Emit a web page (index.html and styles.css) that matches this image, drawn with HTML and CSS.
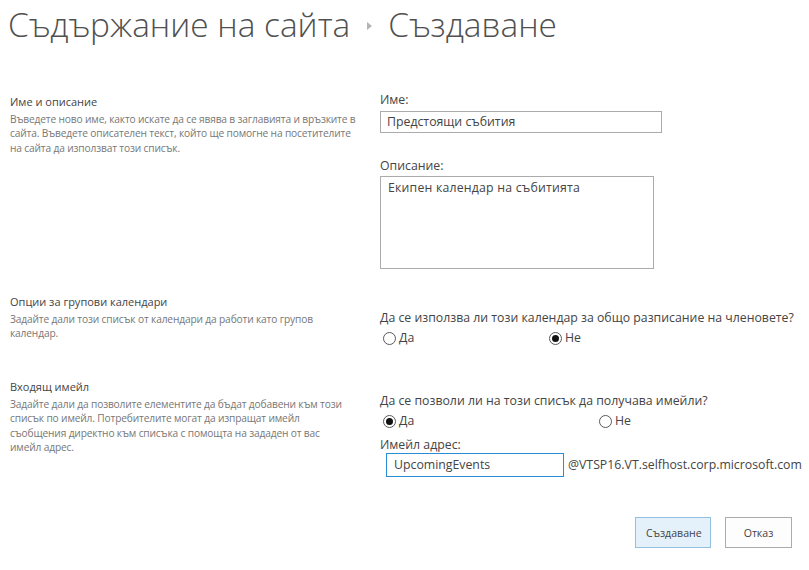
FILE: index.html
```html
<!DOCTYPE html>
<html lang="bg">
<head>
<meta charset="utf-8">
<title>Създаване</title>
<link rel="stylesheet" href="styles.css">
</head>
<body>
<div class="page">
  <h1 class="title">
    <span class="crumb">Съдържание на сайта</span>
    <span class="sep"></span>
    <span class="crumb">Създаване</span>
  </h1>

  <div class="section s1">
    <div class="info">
      <h3 class="info-head">Име и описание</h3>
      <p class="info-desc">Въведете ново име, както искате да се явява в заглавията и връзките в<br>сайта. Въведете описателен текст, който ще помогне на посетителите<br>на сайта да използват този списък.</p>
    </div>
    <div class="fields">
      <div class="label">Име:</div>
      <div class="input name-input">Предстоящи събития</div>
      <div class="label desc-label">Описание:</div>
      <div class="textarea">Екипен календар на събитията</div>
    </div>
  </div>

  <div class="section s2">
    <div class="info">
      <h3 class="info-head">Опции за групови календари</h3>
      <p class="info-desc">Задайте дали този списък от календари да работи като групов<br>календар.</p>
    </div>
    <div class="fields pad2">
      <div class="label">Да се използва ли този календар за общо разписание на членовете?</div>
      <div class="radios">
        <label class="opt w166"><span class="radio"></span>Да</label>
        <label class="opt"><span class="radio checked"></span>Не</label>
      </div>
    </div>
  </div>

  <div class="section s3">
    <div class="info">
      <h3 class="info-head">Входящ имейл</h3>
      <p class="info-desc">Задайте дали да позволите елементите да бъдат добавени към този<br>списък по имейл. Потребителите могат да изпращат имейл<br>съобщения директно към списъка с помощта на зададен от вас<br>имейл адрес.</p>
    </div>
    <div class="fields pad3">
      <div class="label">Да се позволи ли на този списък да получава имейли?</div>
      <div class="radios">
        <label class="opt w216"><span class="radio checked"></span>Да</label>
        <label class="opt"><span class="radio"></span>Не</label>
      </div>
      <div class="label mail-label">Имейл адрес:</div>
      <div class="mail-row">
        <div class="input mail-input">UpcomingEvents</div>
        <span class="suffix">@VTSP16.VT.selfhost.corp.microsoft.com</span>
      </div>
    </div>
  </div>

  <div class="buttons">
    <button class="btn primary">Създаване</button>
    <button class="btn">Отказ</button>
  </div>
</div>
</body>
</html>
```

FILE: styles.css
```css
html, body {
  margin: 0;
  padding: 0;
  background: #ffffff;
}

body {
  font-family: "Open Sans", "Noto Sans", "DejaVu Sans", sans-serif;
  color: #444444;
  font-size: 12.3px;
  line-height: 16px;
}

.page {
  width: 809px;
}

.title {
  margin: 0;
  padding-left: 8px;
  display: flex;
  align-items: center;
  font-size: 33.4px;
  line-height: 48px;
  font-weight: 300;
  color: #505050;
  height: 48px;
}

.sep {
  width: 0;
  height: 0;
  border-top: 4.5px solid transparent;
  border-bottom: 4.5px solid transparent;
  border-left: 5px solid #b4b4b4;
  margin: 4px 16px 0 17px;
}

.section {
  display: grid;
  grid-template-columns: 370px 1fr;
  padding-left: 10px;
}

.s1 { margin-top: 44px; }
.s2 { margin-top: 23px; }
.s3 { margin-top: 30px; }

.info {
  width: 360px;
}

.info-head {
  margin: 0;
  padding-top: 2px;
  font-size: 11px;
  font-weight: 400;
  line-height: 16px;
  color: #444444;
}

.info-desc {
  margin: 2px 0 0;
  font-size: 10.2px;
  line-height: 14.3px;
  letter-spacing: -0.15px;
  color: #777777;
  white-space: nowrap;
}

.label {
  font-size: 12.3px;
  line-height: 16px;
  color: #444444;
}

.input {
  box-sizing: border-box;
  border: 1px solid #ababab;
  height: 22px;
  padding: 2px 6px;
  font-size: 12.3px;
  line-height: 16px;
  color: #444444;
  background: #ffffff;
}

.name-input {
  margin-top: 3px;
  width: 282px;
}

.desc-label {
  margin-top: 25px;
}

.textarea {
  box-sizing: border-box;
  margin-top: 2px;
  width: 274px;
  height: 93px;
  border: 1px solid #ababab;
  padding: 3px 7px;
  font-size: 12.3px;
  line-height: 16px;
  letter-spacing: 0.2px;
}

.pad2 { padding-top: 18px; }
.pad3 { padding-top: 16px; }

.radios {
  display: flex;
  margin-top: 3px;
  padding-left: 3px;
  height: 18px;
  align-items: center;
}

.opt {
  display: flex;
  align-items: center;
  font-size: 12.3px;
}

.w166 { width: 166px; }
.w216 { width: 216px; }

.radio {
  box-sizing: border-box;
  width: 13px;
  height: 13px;
  border: 1px solid #5a5a5a;
  border-radius: 50%;
  margin-right: 3px;
  display: flex;
  align-items: center;
  justify-content: center;
}

.radio.checked::after {
  content: "";
  width: 7px;
  height: 7px;
  border-radius: 50%;
  background: #111111;
}

.mail-label {
  margin-top: 7px;
}

.mail-row {
  display: flex;
  align-items: center;
  margin-top: 0;
}

.mail-input {
  margin-left: 6px;
  width: 178px;
  height: 24px;
  padding: 3px 7px;
  border-color: #2a8dd4;
}

.suffix {
  margin-left: 4px;
  font-size: 12.3px;
}

.buttons {
  display: flex;
  justify-content: flex-end;
  gap: 14px;
  margin-top: 40px;
  padding-right: 17px;
}

.btn {
  box-sizing: border-box;
  height: 31px;
  font-family: "Open Sans", "Noto Sans", "DejaVu Sans", sans-serif;
  font-size: 10.6px;
  color: #444444;
  background: #fdfdfd;
  border: 1px solid #ababab;
  padding: 0 10px;
  width: 67px;
}

.btn.primary {
  width: 76px;
  background: #e5f1fa;
  border-color: #92c0e0;
}
```
